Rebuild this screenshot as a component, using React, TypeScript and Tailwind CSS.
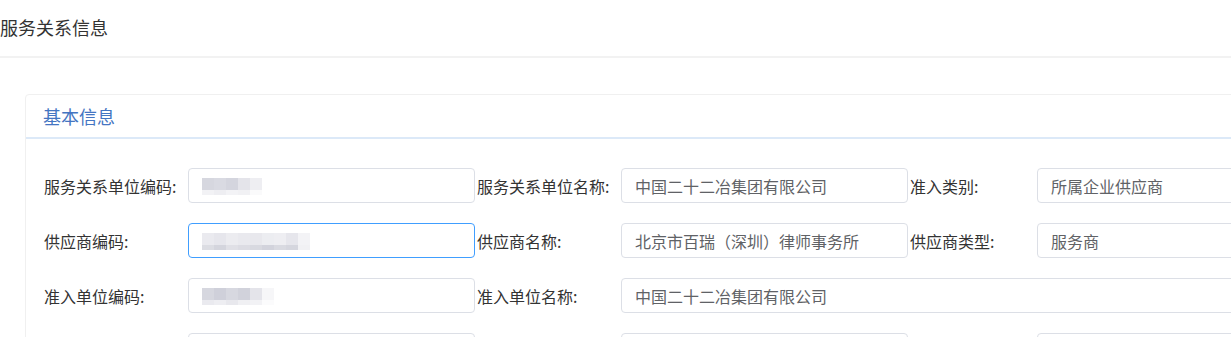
type Cell = { label?: string; labelW: string; value?: string; inputW: string; focus?: boolean; mosaic?: string[][] };

const m1 = [
  ["#d6d7df", "#d9dae2", "#d4d5de", "#e4e4ea", "#eeeef2"],
  ["#f2f2f5", "#eeeef2", "#f3f3f6", "#f1f1f4", "#fafafb"],
];
const m2 = [
  ["#eaeaef", "#e6e6ec", "#ececf0", "#e9e9ee", "#e8e8ed", "#ecedf1", "#eeeef2", "#e6e6ec", "#f3f3f6"],
  ["#dcdde3", "#d4d5dd", "#e0e0e6", "#dcdce3", "#d8d9e0", "#d2d3dc", "#d9dae1", "#d5d6de", "#f1f1f4"],
];
const m3 = [
  ["#d6d7df", "#cfd0da", "#d7d8e0", "#d1d2db", "#e4e4ea", "#f6f6f8"],
  ["#eaeaef", "#eeeef2", "#e8e8ed", "#f0f0f3", "#f2f2f5", "#fbfbfc"],
];

const rows: Cell[][] = [
  [
    { label: "服务关系单位编码:", labelW: "w-[144px]", inputW: "w-[287px]", mosaic: m1 },
    { label: "服务关系单位名称:", labelW: "w-[144px]", inputW: "w-[287px]", value: "中国二十二冶集团有限公司" },
    { label: "准入类别:", labelW: "w-[127px]", inputW: "w-[287px]", value: "所属企业供应商" },
  ],
  [
    { label: "供应商编码:", labelW: "w-[144px]", inputW: "w-[287px]", focus: true, mosaic: m2 },
    { label: "供应商名称:", labelW: "w-[144px]", inputW: "w-[287px]", value: "北京市百瑞（深圳）律师事务所" },
    { label: "供应商类型:", labelW: "w-[127px]", inputW: "w-[287px]", value: "服务商" },
  ],
  [
    { label: "准入单位编码:", labelW: "w-[144px]", inputW: "w-[287px]", mosaic: m3 },
    { label: "准入单位名称:", labelW: "w-[144px]", inputW: "w-[705px]", value: "中国二十二冶集团有限公司" },
  ],
  [
    { labelW: "w-[144px]", inputW: "w-[287px]" },
    { labelW: "w-[144px]", inputW: "w-[287px]" },
    { labelW: "w-[127px]", inputW: "w-[287px]" },
  ],
];

// blurred-out codes are drawn as mosaic blocks: tall top line, short bottom line
function Mosaic({ blocks }: { blocks: string[][] }) {
  return (
    <div className="flex flex-col pt-[2px]">
      {blocks.map((line, i) => (
        <div key={i} className="flex">
          {line.map((c, j) => (
            <div key={j} className={`w-[12px] ${i === 0 ? "h-[12px]" : "h-[5px]"}`} style={{ backgroundColor: c }} />
          ))}
        </div>
      ))}
    </div>
  );
}

function Field({ cell }: { cell: Cell }) {
  return (
    <div className="flex items-center mr-[2px]">
      <div className={`${cell.labelW} shrink-0 text-[16px] text-[#333]`}>{cell.label}</div>
      <div
        className={`${cell.inputW} shrink-0 h-[35px] rounded-[4px] border flex items-center pl-[13px] text-[16px] text-[#606266] ${
          cell.focus ? "border-[#409eff]" : "border-[#dcdfe6]"
        }`}
      >
        {cell.mosaic ? <Mosaic blocks={cell.mosaic} /> : cell.value}
      </div>
    </div>
  );
}

export default function App() {
  return (
    <div className="w-[1231px] h-[337px] overflow-hidden bg-white font-['Noto_Sans_CJK_SC','Liberation_Sans',sans-serif]">
      <div className="h-[58px] flex items-center pb-[2px] border-b-2 border-[#f2f2f2] text-[18px] text-[#333]">
        服务关系信息
      </div>

      <div className="pl-[25px] pt-[36px]">
        <div className="w-[1340px] border border-[#f0f0f0] rounded-tl-[4px]">
          <div className="h-[44px] flex items-center pl-[17px] border-b-2 border-[#dce9f8] text-[18px] text-[#4475c2]">
            基本信息
          </div>

          <div className="pl-[18px] pt-[29px] flex flex-col gap-[20px]">
            {rows.map((row, i) => (
              <div key={i} className="flex">
                {row.map((cell, j) => (
                  <Field key={j} cell={cell} />
                ))}
              </div>
            ))}
          </div>
        </div>
      </div>
    </div>
  );
}
